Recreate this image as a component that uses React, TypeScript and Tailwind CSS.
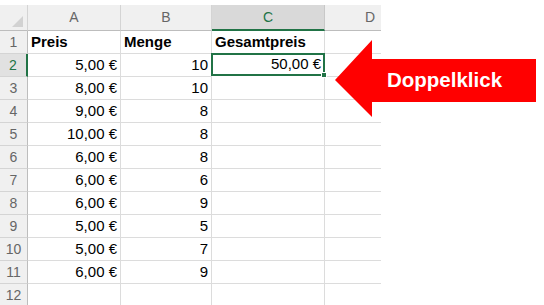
import React from "react";

const rows: [string, string, string][] = [
  ["5,00 €", "10", "50,00 €"],
  ["8,00 €", "10", ""],
  ["9,00 €", "8", ""],
  ["10,00 €", "8", ""],
  ["6,00 €", "8", ""],
  ["6,00 €", "6", ""],
  ["6,00 €", "9", ""],
  ["5,00 €", "5", ""],
  ["5,00 €", "7", ""],
  ["6,00 €", "9", ""],
  ["", "", ""],
];

const font = { fontFamily: '"Liberation Sans", Arial, sans-serif' };

function RowHead({ n, active }: { n: number; active?: boolean }) {
  return (
    <div
      className={
        active
          ? "h-[23px] flex items-center justify-center bg-[#e1e1e1] text-[#217346] text-[14px] border-b border-[#d4d4d4] border-r-2 border-r-[#217346]"
          : "h-[23px] flex items-center justify-center bg-[#f0f0f0] text-[#666] text-[14px] border-b border-[#d4d4d4] border-r border-r-[#bdbdbd]"
      }
    >
      {n}
    </div>
  );
}

function Cell({
  children,
  right,
  bold,
}: {
  children?: React.ReactNode;
  right?: boolean;
  bold?: boolean;
}) {
  return (
    <div
      className={`h-[23px] flex items-center text-[15px] text-black border-r border-b border-[#dcdcdc] ${
        right ? "justify-end pr-[3px]" : "justify-start pl-[3px]"
      } ${bold ? "font-bold" : ""}`}
    >
      {children}
    </div>
  );
}

export default function App() {
  return (
    <div className="relative w-[544px] h-[305px] bg-white overflow-hidden" style={font}>
      <div className="pt-[5px] w-[381px] overflow-hidden">
        <div className="grid grid-cols-[28px_93px_91px_113px_90px] w-[415px]">
          {/* column headers */}
          <div className="h-[26px] bg-[#f0f0f0] border-b border-[#bdbdbd] border-r border-r-[#d4d4d4] flex items-end justify-end pr-[4px] pb-[3px]">
            <svg width="11" height="11" viewBox="0 0 11 11">
              <polygon points="11,0 11,11 0,11" fill="#d2d2d2" />
            </svg>
          </div>
          <div className="h-[26px] bg-[#f0f0f0] border-b border-[#bdbdbd] border-r border-r-[#d4d4d4] flex items-center justify-center text-[14px] text-[#666]">
            A
          </div>
          <div className="h-[26px] bg-[#f0f0f0] border-b border-[#bdbdbd] border-r border-r-[#d4d4d4] flex items-center justify-center text-[14px] text-[#666]">
            B
          </div>
          <div className="h-[26px] bg-[#d9d9d9] border-b-2 border-[#217346] border-r border-r-[#c8c8c8] flex items-center justify-center text-[14px] text-[#217346]">
            C
          </div>
          <div className="h-[26px] bg-[#f0f0f0] border-b border-[#bdbdbd] flex items-center justify-center text-[14px] text-[#666]">
            D
          </div>

          {/* row 1: labels */}
          <RowHead n={1} />
          <Cell bold>Preis</Cell>
          <Cell bold>Menge</Cell>
          <Cell bold>Gesamtpreis</Cell>
          <Cell />

          {rows.map((r, i) => (
            <React.Fragment key={i}>
              <RowHead n={i + 2} active={i === 0} />
              <Cell right>{r[0]}</Cell>
              <Cell right>{r[1]}</Cell>
              {i === 0 ? (
                <div className="relative h-[23px] flex items-center justify-end pr-[2px] text-[15px] text-black border-2 border-[#217346] -mt-px -ml-px">
                  {r[2]}
                  <div className="absolute -right-[4px] -bottom-[4px] w-[6px] h-[6px] bg-[#217346] border border-white" />
                </div>
              ) : (
                <Cell right>{r[2]}</Cell>
              )}
              <Cell />
            </React.Fragment>
          ))}
        </div>
      </div>

      {/* red arrow pointing at the selected cell */}
      <svg className="absolute left-0 top-0" width="544" height="305" viewBox="0 0 544 305">
        <polygon
          points="335,80 372,40 372,59 536,59 536,102 372,102 372,117"
          fill="#ff0000"
        />
      </svg>
      <div className="absolute left-[387px] top-[59px] h-[43px] flex items-center text-white font-bold text-[20.5px]">
        Doppelklick
      </div>
    </div>
  );
}
